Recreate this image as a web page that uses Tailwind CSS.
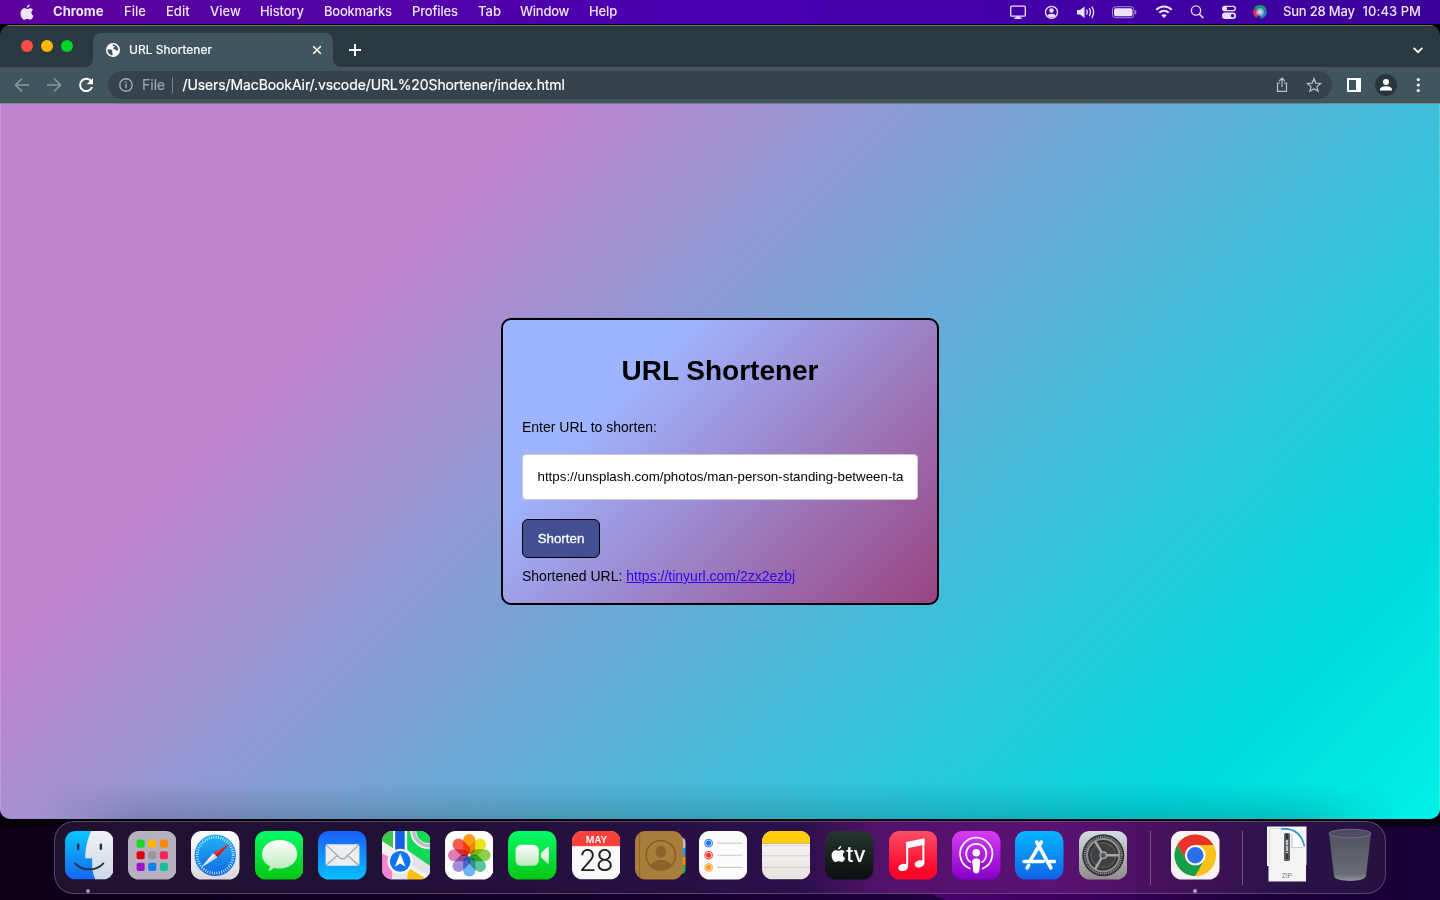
<!DOCTYPE html>
<html lang="en">
<head>
<meta charset="utf-8">
<title>URL Shortener</title>
<script src="https://cdn.jsdelivr.net/npm/@tailwindcss/browser@4"></script>
</head>
<body class="w-[1440px] h-[900px] overflow-hidden flex flex-col bg-[#12001f] font-['Inter',sans-serif]">

<!-- Menu bar -->
<header class="h-6 shrink-0 flex items-center bg-linear-to-r from-[#5c009c] via-[#4900b2] to-[#3b0099] text-[#f0e6fa] text-[13px] leading-[22px] font-medium">
  <div class="w-[53px] pl-[20px] flex">
    <svg width="14" height="17" viewBox="0 0 14 17" fill="#eee4f5"><path d="M9.700.4c.1 1.500-1.200 3.400-2.900 3.400C6.600 2.200 8.200.5 9.700.4zM7.100 5c.7 0 1.600-.8 3-.8 1.200 0 2.300.6 3 1.600-2.500 1.500-2.100 5 .5 6-.6 1.700-2 4-3.300 4-1.100 0-1.500-.7-2.900-.7s-1.800.7-2.900.7C2.700 15.800.5 12.500.5 9.400c0-3.100 1.900-5.100 4-5.100 1.200 0 2 .7 2.600.7z"/></svg>
  </div>
  <div class="w-[71px] h-6 font-bold tracking-[0.05px]">Chrome</div>
  <div class="w-[42px] h-6">File</div>
  <div class="w-[44px] h-6">Edit</div>
  <div class="w-[50px] h-6">View</div>
  <div class="w-[64px] h-6 tracking-[-0.15px]">History</div>
  <div class="w-[88px] h-6 tracking-[-0.25px]">Bookmarks</div>
  <div class="w-[66px] h-6 tracking-[-0.15px]">Profiles</div>
  <div class="w-[42px] h-6">Tab</div>
  <div class="w-[69px] h-6 tracking-[-0.25px]">Window</div>
  <div class="w-[421px] h-6 tracking-[-0.15px]">Help</div>
  <svg class="shrink-0" width="273" height="24" viewBox="1010 0 273 24" fill="none" stroke="#ece2f7" stroke-width="1.300">
    <rect x="1010.700" y="6.200" width="14.600" height="10" rx="1"/><path d="M1014.500 18.200h7" stroke-width="1.600"/><path d="M1018 16v2" stroke-width="3"/>
    <circle cx="1051.500" cy="12.300" r="6"/><circle cx="1051.500" cy="10.500" r="2.200" fill="#ece2f7" stroke="none"/><path d="M1047.300 15.800c.8-2.800 7.600-2.800 8.400 0a6 6 0 0 1-8.400 0z" fill="#ece2f7" stroke="none"/>
    <path d="M1077 10h3l4.500-3.600v11.600l-4.500-3.600h-3z" fill="#ece2f7" stroke="none"/><path d="M1086.600 9.700q1.500 2.500 0 5M1089.200 8.200q2.600 4 0 8M1091.800 6.500q3.800 5.700 0 11.400"/>
    <rect x="1112.500" y="6.700" width="21.500" height="11" rx="3.200" stroke-opacity=".6" stroke-width="1"/><rect x="1114" y="8.200" width="18.500" height="8" rx="2" fill="#ece2f7" stroke="none"/><path d="M1135.600 10.300v3.800" stroke-opacity=".6"/>
    <path d="M1156.300 9.700c4.300-4.300 11.100-4.300 15.400 0M1159.300 12.800c2.700-2.700 6.700-2.700 9.400 0" stroke-width="2"/><path d="M1164 17.900l-2.700-2.700c1.500-1.400 3.900-1.400 5.400 0z" fill="#ece2f7" stroke="none"/>
    <circle cx="1196" cy="10.500" r="4.600"/><path d="M1199.300 14l4 4" stroke-width="1.700"/>
    <rect x="1222.700" y="6.400" width="12.600" height="4.300" rx="2.150"/><circle cx="1224.800" cy="8.500" r="1.700" fill="#ece2f7"/><rect x="1222" y="12.400" width="14" height="6.500" rx="3.250" fill="#ece2f7" stroke="none"/><circle cx="1232.500" cy="15.700" r="1.800" fill="#4300a8" stroke="none"/>
    <defs><radialGradient id="siri"><stop offset="0" stop-color="#fff"/><stop offset=".35" stop-color="#b9b6e6"/><stop offset="1" stop-color="#fff" stop-opacity="0"/></radialGradient></defs>
    <g stroke="none"><circle cx="1260" cy="12" r="6.800" fill="#252f75"/><path d="M1260 12L1254 8.500a6.800 6.800 0 0 1 12.600 2z" fill="#17947c"/><path d="M1260 12l-6.300-2.800a6.800 6.800 0 0 0 2.600 8.600z" fill="#e0305f"/><path d="M1260 12l6.700-1a6.800 6.800 0 0 1-6 7.700z" fill="#2a7fd0"/><circle cx="1260" cy="12" r="4.600" fill="url(#siri)"/></g>
  </svg>
  <div class="w-[79.500px] h-6 tracking-[-0.2px]">Sun 28 May</div>
  <div class="h-6 whitespace-nowrap tracking-[0.050px]">10:43 PM</div>
</header>

<!-- Browser window -->
<main class="h-[795px] shrink-0 pt-px bg-black">
<div class="h-[794px] flex flex-col rounded-[10px] overflow-hidden bg-[#2a383f]">
  <!-- Tab strip -->
  <div class="h-[42px] shrink-0 flex items-end border-t border-[#697377]">
    <div class="w-[85px] h-[41px] flex gap-2 pl-[21px] pt-[14px]">
      <i class="size-3 rounded-full bg-[#ff4f48]"></i><i class="size-3 rounded-full bg-[#ffb900]"></i><i class="size-3 rounded-full bg-[#00d42b]"></i>
    </div>
    <svg width="8" height="8" viewBox="0 0 8 8"><path d="M8 0v8H0a8 8 0 0 0 8-8z" fill="#41555f"/></svg>
    <div class="w-[240px] h-[34px] rounded-t-lg bg-[#41555f] flex items-center pl-[13px] pr-[11px]">
      <svg width="14" height="14" viewBox="0 0 14 14"><circle cx="7" cy="7" r="7" fill="#fff"/><path d="M1.600 6.300l3.600.300c1.200.100 1.400 1.200.900 2.100-.4.800.9.900.800 1.900-.1.700-.6 1-.6 1.900C3.500 12.200 1.300 9.500 1.600 6.300zM6.500 1.600c-.3 1.300.6 1.500 1.600 1.500 1 0 .8 1.200-.3 1.400-1.300.300-.8 1.500.3 1.400 1.400-.1 1.500 1.600 2.600 1.700.7.100 1-.3 1.600-.2.200-3.400-2.600-6.100-5.800-5.800z" fill="#41555f"/></svg>
      <span class="ml-[9px] flex-1 text-[12px] leading-4 text-white [-webkit-text-stroke:0.2px_white]">URL Shortener</span>
      <svg width="10" height="10" viewBox="0 0 10 10" stroke="#fff" stroke-width="1.600"><path d="M1.200 1.200l7.600 7.600M8.800 1.200L1.200 8.800"/></svg>
    </div>
    <svg width="8" height="8" viewBox="0 0 8 8"><path d="M0 0v8h8a8 8 0 0 1-8-8z" fill="#41555f"/></svg>
    <svg class="ml-2 mb-[11px]" width="12" height="12" viewBox="0 0 12 12" stroke="#fff" stroke-width="2"><path d="M6 0v12M0 6h12"/></svg>
    <svg class="ml-auto mr-[17px] mb-[13px]" width="10" height="8" viewBox="0 0 10 8" fill="none" stroke="#fff" stroke-width="1.800"><path d="M.6 1.800L5 6.200l4.400-4.400"/></svg>
  </div>
  <!-- Toolbar -->
  <div class="h-[37px] shrink-0 flex items-center bg-[#41555f] border-b border-[#74858c]">
    <svg width="108" height="36" viewBox="0 0 108 36" fill="none" stroke="#8c989e" stroke-width="1.700"><path d="M29 18H16M22 11.500L15.500 18l6.500 6.500M47 18h13M54 11.500l6.500 6.500-6.500 6.500"/><path d="M91.500 14.500a6.200 6.200 0 1 0 .6 5.500" stroke="#fff" stroke-width="2"/><path d="M93 11v6.300h-6.300z" fill="#fff" stroke="none"/></svg>
    <div class="w-[1224px] h-7 rounded-full bg-[#36434c] flex items-center pl-[11px] text-[14px] leading-5">
      <svg width="14" height="14" viewBox="0 0 14 14" fill="none" stroke="#a3abaf" stroke-width="1.400"><circle cx="7" cy="7" r="6.200"/><path d="M7 6v4.300M7 3.500v1.500"/></svg>
      <span class="ml-[9px] w-[30px] text-[#9ca4a9] [-webkit-text-stroke:0.2px_#9ca4a9]">File</span>
      <i class="w-px h-4 bg-[#7c868c]"></i>
      <span class="ml-[9.500px] flex-1 text-white tracking-[-0.1px] [-webkit-text-stroke:0.2px_white]">/Users/MacBookAir/.vscode/URL%20Shortener/index.html</span>
      <svg class="mr-[8px]" width="48" height="18" viewBox="0 0 48 18" fill="none" stroke="#bcc3c7" stroke-width="1.200"><path d="M4 7H1.500v8.400h9V7H8M6 11V2.500M3.200 5L6 2.200 8.800 5"/><path d="M38 2.700l1.800 4.400 4.800.4-3.600 3.100 1.100 4.600L38 12.700l-4.100 2.500L35 10.600l-3.600-3.100 4.800-.4z"/></svg>
    </div>
    <svg width="107" height="36" viewBox="1332 0 107 36"><path fill-rule="evenodd" d="M1347 11h14v14h-14zM1349 13v10h7V13z" fill="#fff"/><circle cx="1386" cy="18" r="11" fill="#29363d"/><circle cx="1386" cy="15" r="3" fill="#fff"/><path d="M1380 23.500v-1c0-4.500 12-4.500 12 0v1z" fill="#fff"/><g fill="#fff"><circle cx="1418.300" cy="12.500" r="1.600"/><circle cx="1418.300" cy="18" r="1.600"/><circle cx="1418.300" cy="23.500" r="1.600"/></g></svg>
  </div>
  <!-- Page -->
  <div class="relative flex-1 flex flex-col items-center pt-[214px] bg-[linear-gradient(135deg,#bf83d0_25.7%,#00dbde_86.8%,#00f1e6_100%)] bg-origin-border border-x border-white/20 font-['Liberation_Sans',Arial,sans-serif] text-black">
    <div class="absolute left-[40px] bottom-0 w-[1360px] h-[36px] bg-linear-to-b from-transparent to-black/15 [mask-image:linear-gradient(90deg,transparent,#000_8%,#000_92%,transparent)]"></div>
    <section class="w-[438px] h-[287px] rounded-[10px] border-2 border-black bg-[linear-gradient(135deg,#9fb4ff_26.500%,#994380_100%)] bg-origin-border px-[19px] flex flex-col items-start">
      <h1 class="self-center mt-[33px] text-[28px] leading-9 font-bold">URL Shortener</h1>
      <label class="mt-[28px] text-[14px] leading-5">Enter URL to shorten:</label>
      <div class="mt-[17px] w-[396px] h-[46px] rounded border border-[#ccc] bg-white px-[14.500px] flex items-center text-[13.333px] whitespace-nowrap">https://unsplash.com/photos/man-person-standing-between-ta</div>
      <button class="mt-[19px] w-[78px] h-[39px] rounded-md border border-black bg-[#424f93] text-white text-[13.333px] font-['Liberation_Sans',Arial,sans-serif] [-webkit-text-stroke:0.3px_white]">Shorten</button>
      <p class="mt-[8px] text-[14px] leading-5">Shortened URL: <a class="text-[#3300ee] underline">https://tinyurl.com/2zx2ezbj</a></p>
    </section>
  </div>
</div>
</main>

<!-- Desktop with dock -->
<footer class="relative flex-1 pl-[54px] pt-[2px] bg-[linear-gradient(90deg,#0d0018_0%,#100025_35%,#1b0038_58%,#2a004b_75%,#1a0038_92%,#170037_100%)]">
  <svg class="absolute left-0 top-[74px]" width="1440" height="7"><defs><linearGradient id="wp"><stop stop-color="#4d0070"/><stop offset="1" stop-color="#4d0070" stop-opacity="0"/></linearGradient></defs><path d="M930 0q8 5 16 7h290V0z" fill="url(#wp)"/></svg>
  <div class="absolute inset-x-0 top-0 h-3 bg-linear-to-b from-black/90 to-transparent"></div>
  <div class="relative w-[1332px] h-[73px] rounded-[20px] border border-[#6d5a80]/70 bg-[linear-gradient(90deg,#20122f_0%,#221039_30%,#2b104a_56%,#52126a_62%,#5b1273_75%,#48115f_83%,#2c124a_92%,#251241_100%)] pl-[9.600px] pt-[9px] flex items-start gap-[14.900px]">

    <!-- Finder -->
    <svg class="size-[48.500px] shrink-0" viewBox="0 0 48 48">
      <defs><linearGradient id="fb" x2="0" y2="1"><stop stop-color="#08c7ff"/><stop offset="1" stop-color="#1666f4"/></linearGradient><linearGradient id="fw" x2="0" y2="1"><stop stop-color="#f1f0f3"/><stop offset="1" stop-color="#ccd8e6"/></linearGradient><clipPath id="sq"><rect width="48" height="48" rx="10.500"/></clipPath></defs>
      <g clip-path="url(#sq)"><rect width="48" height="48" fill="url(#fb)"/><path d="M26 0c-4 8-6 18-6 27h7c-.5 7 0 15 3 21h18V0z" fill="url(#fw)"/></g>
      <path d="M13 13.500v4M35.500 13.500v4" stroke="#1c3346" stroke-width="2.400" stroke-linecap="round"/><path d="M10 32c7 8 21 8 28 0" fill="none" stroke="#24313d" stroke-width="1.700" stroke-linecap="round"/>
    </svg>
    <!-- Launchpad -->
    <svg class="size-[48.500px] shrink-0" viewBox="0 0 48 48"><rect width="48" height="48" rx="10.500" fill="#b6b0bf"/>
      <rect x="8.500" y="8.500" width="8" height="8" rx="2" fill="#17d52c"/><rect x="20" y="8.500" width="8" height="8" rx="2" fill="#fdb70d"/><rect x="31.500" y="8.500" width="8" height="8" rx="2" fill="#fb8607"/>
      <rect x="8.500" y="20" width="8" height="8" rx="2" fill="#e0000d"/><rect x="20" y="20" width="8" height="8" rx="2" fill="#969a9c"/><rect x="31.500" y="20" width="8" height="8" rx="2" fill="#fb2355"/>
      <rect x="8.500" y="31.500" width="8" height="8" rx="2" fill="#a013cf"/><rect x="20" y="31.500" width="8" height="8" rx="2" fill="#137df5"/><rect x="31.500" y="31.500" width="8" height="8" rx="2" fill="#15be98"/>
    </svg>
    <!-- Safari -->
    <svg class="size-[48.500px] shrink-0" viewBox="0 0 48 48"><defs><linearGradient id="sw" x2="0" y2="1"><stop stop-color="#fff"/><stop offset="1" stop-color="#d9d8da"/></linearGradient><linearGradient id="sb" x2="0" y2="1"><stop stop-color="#1db4f6"/><stop offset="1" stop-color="#1468e2"/></linearGradient></defs>
      <rect width="48" height="48" rx="10.500" fill="url(#sw)"/><circle cx="24" cy="24" r="20.500" fill="url(#sb)"/><circle cx="24" cy="24" r="17.800" fill="none" stroke="#d9efff" stroke-width="2.800" stroke-dasharray=".8 1.530"/><path d="M38.500 12L26 26l-4-4z" fill="#f0322d"/><path d="M38.500 12L26 26l-2-2z" fill="#c31c22"/><path d="M10 36l12-14 4 4z" fill="#fff"/><path d="M10 36l14-12 2 2z" fill="#c9d2dc"/>
    </svg>
    <!-- Messages -->
    <svg class="size-[48.500px] shrink-0" viewBox="0 0 48 48"><defs><linearGradient id="gr" x2="0" y2="1"><stop stop-color="#05fb68"/><stop offset="1" stop-color="#06c713"/></linearGradient><linearGradient id="wg" x2="0" y2="1"><stop stop-color="#fff"/><stop offset="1" stop-color="#b9e9ba"/></linearGradient></defs>
      <rect width="48" height="48" rx="10.500" fill="url(#gr)"/><path d="M24.500 8.800C14.500 8.800 7 14.700 7 23c0 5 3 9.500 7.800 12-.2 1.800-.9 3-2 4.200 2.700-.2 4.500-1 5.800-2.700 13.500 2.600 23.200-4.600 23.200-13.500 0-8.300-7.300-14.200-17.300-14.200z" fill="url(#wg)"/>
    </svg>
    <!-- Mail -->
    <svg class="size-[48.500px] shrink-0" viewBox="0 0 48 48"><defs><linearGradient id="mb" x2="0" y2="1"><stop stop-color="#1a5ff6"/><stop offset="1" stop-color="#07bfff"/></linearGradient></defs>
      <rect width="48" height="48" rx="10.500" fill="url(#mb)"/><rect x="7.500" y="13" width="33.500" height="21.500" rx="2" fill="#ebedf0"/><path d="M8.500 33.700L20 23.500M40 33.700L28.500 23.500M8.300 14l12.500 12c2.300 2.200 4.600 2.200 6.900 0l12.500-12" fill="none" stroke="#a4a8ae" stroke-width="1.200"/>
    </svg>
    <!-- Maps -->
    <svg class="size-[48.500px] shrink-0" viewBox="0 0 48 48"><g clip-path="url(#sq)"><rect width="48" height="48" fill="#f0f0f2"/><path d="M0 0h11v17L0 10z" fill="#3cc74a"/><path d="M25 0h23v38L25 20z" fill="#10d956"/><path d="M0 22l10 5v21H0z" fill="#f683cf"/><path d="M27 37l18 11H24z" fill="#fdbf07"/><path d="M24 18l24 17v10L24 30z" fill="#e2e2e8"/><circle cx="46" cy="0" r="15" fill="none" stroke="#f5f5f7" stroke-width="6"/><circle cx="46" cy="0" r="14.500" fill="none" stroke="#bdbdc4" stroke-width="3.500"/><path d="M11 0h13.500v26H11z" fill="#fff"/><path d="M13 0h9.500v26H13z" fill="#1163e4"/><path d="M10 38h15v10H10z" fill="#e6e6ea"/></g>
      <circle cx="18" cy="30" r="12.500" fill="#f7f8fa"/><circle cx="18" cy="30" r="10.300" fill="#1173f4"/><path d="M18 22l5.300 13.500L18 32.200l-5.300 3.300z" fill="#fff"/>
    </svg>
    <!-- Photos -->
    <svg class="size-[48.500px] shrink-0" viewBox="0 0 48 48"><rect width="48" height="48" rx="10.500" fill="#fdfdfd"/>
      <g><rect x="18" y="3" width="12" height="20" rx="6" fill="#ff9d16" class="mix-blend-multiply"/><rect x="18" y="3" width="12" height="20" rx="6" fill="#ece41a" class="mix-blend-multiply" transform="rotate(45 24 24)"/><rect x="18" y="3" width="12" height="20" rx="6" fill="#8ed04a" class="mix-blend-multiply" transform="rotate(90 24 24)"/><rect x="18" y="3" width="12" height="20" rx="6" fill="#5cc79c" class="mix-blend-multiply" transform="rotate(135 24 24)"/><rect x="18" y="3" width="12" height="20" rx="6" fill="#6cb8f3" class="mix-blend-multiply" transform="rotate(180 24 24)"/><rect x="18" y="3" width="12" height="20" rx="6" fill="#a28fd8" class="mix-blend-multiply" transform="rotate(225 24 24)"/><rect x="18" y="3" width="12" height="20" rx="6" fill="#de80bb" class="mix-blend-multiply" transform="rotate(270 24 24)"/><rect x="18" y="3" width="12" height="20" rx="6" fill="#fb5c4c" class="mix-blend-multiply" transform="rotate(315 24 24)"/></g>
    </svg>
    <!-- FaceTime -->
    <svg class="size-[48.500px] shrink-0" viewBox="0 0 48 48"><rect width="48" height="48" rx="10.500" fill="url(#gr)"/><rect x="7.500" y="13.500" width="23" height="21" rx="5.500" fill="url(#wg)"/><path d="M32.500 22l6.200-5.800c.8-.8 1.800-.4 1.800.7v14.200c0 1.100-1 1.500-1.800.7L32.500 26z" fill="url(#wg)"/></svg>
    <!-- Calendar -->
    <svg class="size-[48.500px] shrink-0" viewBox="0 0 48 48"><g clip-path="url(#sq)"><rect width="48" height="48" fill="#f9f9f9"/><rect width="48" height="15" fill="#fb4139"/></g><text x="24.200" y="11.700" text-anchor="middle" font-family="Inter" font-weight="600" font-size="9.200" fill="#fff">MAY</text><text x="23.500" y="40" text-anchor="middle" font-family="Inter" font-weight="300" font-size="29" letter-spacing="-1" fill="#222">28</text></svg>
    <!-- Contacts -->
    <svg class="size-[48.500px] shrink-0 overflow-visible" viewBox="0 0 48 48"><path d="M45 6q5 1 5 5v6h-5z" fill="#c2bcb6"/><path d="M45 17h5v8.500h-5z" fill="#239fe0"/><path d="M45 25.500h5V34h-5z" fill="#f68a13"/><path d="M45 34h5v4q0 4-5 5z" fill="#12bd55"/><rect width="47.500" height="48" rx="10" fill="#ab7d3b"/><path d="M4.500 2.500v43" stroke="#926629"/><g stroke="#855d28" stroke-width="1.500" fill="none"><circle cx="25.500" cy="24" r="14.500"/></g><ellipse cx="25.500" cy="20.500" rx="5.200" ry="6" fill="#8b622c"/><path d="M15.500 34c3-7 17-7 20 0a14 14 0 0 1-20 0z" fill="#8b622c"/></svg>
    <!-- Reminders -->
    <svg class="size-[48.500px] shrink-0" viewBox="0 0 48 48"><rect width="48" height="48" rx="10.500" fill="#fcfcfc"/><g stroke="#c9c9cc"><path d="M18 12h25M18 24h25M18 36h25"/></g><g fill="none"><g stroke="#1675fb"><circle cx="9.500" cy="12" r="3.700"/></g><g stroke="#fb2d2b"><circle cx="9.500" cy="24" r="3.700"/></g><g stroke="#fb9d22"><circle cx="9.500" cy="36" r="3.700"/></g></g><circle cx="9.500" cy="12" r="2.500" fill="#1675fb"/><circle cx="9.500" cy="24" r="2.500" fill="#fb2d2b"/><circle cx="9.500" cy="36" r="2.500" fill="#fb9d22"/></svg>
    <!-- Notes -->
    <svg class="size-[48.500px] shrink-0" viewBox="0 0 48 48"><defs><linearGradient id="nt" x2="0" y2="1"><stop stop-color="#fbfaf9"/><stop offset="1" stop-color="#e6e2df"/></linearGradient></defs><g clip-path="url(#sq)"><rect width="48" height="48" fill="url(#nt)"/><rect width="48" height="12" fill="#fecf07"/><path d="M0 12.400h48" stroke="#b8a67c" stroke-width=".8"/></g><path d="M1 14.500h46" stroke="#b4b1ae" stroke-width="1" stroke-dasharray=".9 1.100"/><path d="M0 24.500h48M0 36h48" stroke="#d3d0ce"/></svg>
    <!-- TV -->
    <svg class="size-[48.500px] shrink-0" viewBox="0 0 48 48"><defs><linearGradient id="tv" x2="0" y2="1"><stop stop-color="#26352f"/><stop offset="1" stop-color="#0b0f10"/></linearGradient></defs><rect width="48" height="48" rx="10.500" fill="url(#tv)"/><path transform="translate(6 14.500) scale(1.030)" fill="#fff" d="M9.700.4c.1 1.500-1.200 3.400-2.900 3.400C6.600 2.200 8.200.5 9.700.4zM7.100 5c.7 0 1.600-.8 3-.8 1.200 0 2.300.6 3 1.600-2.500 1.500-2.100 5 .5 6-.6 1.700-2 4-3.300 4-1.100 0-1.500-.7-2.900-.7s-1.800.7-2.900.7C2.700 15.800.5 12.500.5 9.400c0-3.100 1.900-5.100 4-5.100 1.200 0 2 .7 2.600.7z"/><text x="21" y="31" font-family="Inter" font-weight="500" font-size="21" letter-spacing="-.3" fill="#fff">tv</text></svg>
    <!-- Music -->
    <svg class="size-[48.500px] shrink-0" viewBox="0 0 48 48"><defs><linearGradient id="mu" x2="0" y2="1"><stop stop-color="#fb4e67"/><stop offset=".8" stop-color="#fb0729"/></linearGradient></defs><rect width="48" height="48" rx="10.500" fill="url(#mu)"/><path d="M34 8v23.500M18 35V12" fill="none" stroke="#fff" stroke-width="2"/><path d="M17 10.800L35 7.200v6.500l-18 3.600z" fill="#fff"/><ellipse cx="14" cy="36" rx="4.900" ry="3.500" fill="#fff" transform="rotate(-15 14 36)"/><ellipse cx="30.200" cy="32.500" rx="4.900" ry="3.500" fill="#fff" transform="rotate(-15 30.200 32.500)"/></svg>
    <!-- Podcasts -->
    <svg class="size-[48.500px] shrink-0" viewBox="0 0 48 48"><defs><linearGradient id="po" x2="0" y2="1"><stop stop-color="#d83df4"/><stop offset="1" stop-color="#8500c7"/></linearGradient></defs><rect width="48" height="48" rx="10.500" fill="url(#po)"/><g fill="none" stroke="#fff" stroke-width="1.700" stroke-linecap="round"><path d="M17.500 37.200a16 16 0 1 1 13 0"/><path d="M18.200 30.800a10 10 0 1 1 11.600 0"/></g><circle cx="24" cy="21.500" r="3.700" fill="#fff"/><path d="M20 30c0-4 8-4 8 0l-1 9.500c-.5 3.300-5.500 3.300-6 0z" fill="#fff"/></svg>
    <!-- App Store -->
    <svg class="size-[48.500px] shrink-0" viewBox="0 0 48 48"><defs><linearGradient id="as" x2="0" y2="1"><stop stop-color="#06b6fd"/><stop offset="1" stop-color="#1163e7"/></linearGradient></defs><rect width="48" height="48" rx="10.500" fill="url(#as)"/><g stroke="#fff" stroke-width="3.600" stroke-linecap="round"><path d="M26 11L15 29.500M21.500 11l14 25.500M9 30.200h19M34.500 30.200H39M13.500 34L12 36.500"/></g></svg>
    <!-- Settings -->
    <svg class="size-[48.500px] shrink-0" viewBox="0 0 48 48"><defs><linearGradient id="st" x2="0" y2="1"><stop stop-color="#d2dae2"/><stop offset="1" stop-color="#918d8c"/></linearGradient></defs><rect width="48" height="48" rx="10.500" fill="url(#st)"/><circle cx="24" cy="24" r="20.800" fill="#303133"/><circle cx="24" cy="24" r="18.300" fill="none" stroke="#929496" stroke-width="1.800" stroke-dasharray="1.100 .815"/><circle cx="24" cy="24" r="16" fill="none" stroke="#8f9193" stroke-width="2"/><circle cx="24" cy="24" r="12.300" fill="#3e4042" stroke="#626466" stroke-width="1.600" stroke-dasharray="1 .5"/><path d="M24 24h15.500M24 24l-8-13.500M24 24l-8 13.500" stroke="#a7a9ab" stroke-width="2.400"/><circle cx="24" cy="24" r="3.200" fill="#55585a" stroke="#a7a9ab" stroke-width="1.300"/></svg>
    <i class="w-px h-[54px] shrink-0 ml-[7.500px] bg-[#77558a]"></i>
    <!-- Chrome -->
    <svg class="size-[48.500px] shrink-0 ml-[5.500px]" viewBox="0 0 48 48"><rect width="48" height="48" rx="10.500" fill="#f5f3f7"/><circle cx="24" cy="24" r="20.500" fill="#fcc21b"/><path d="M6.250 13.750A20.500 20.500 0 0 1 41.750 13.750H24L15.100 29.100z" fill="#e8332a"/><path d="M6.250 13.750A20.500 20.500 0 0 0 24 44.500L32.900 29.100H15.100z" fill="#14a049"/><path d="M24 44.500L32.900 29.100A10.250 10.250 0 0 0 32.900 18.900L24 13.750h17.750A20.500 20.500 0 0 1 24 44.500z" fill="#fcc21b"/><circle cx="24" cy="24" r="10.250" fill="#fff"/><circle cx="24" cy="24" r="8.200" fill="#2a6fee"/></svg>
    <i class="w-px h-[54px] shrink-0 ml-[7px] bg-[#6c5683]"></i>
    <!-- Zip file -->
    <svg class="w-[40px] h-[56px] shrink-0 ml-[10px] -mt-[5px]" viewBox="0 0 40 56"><path d="M0 .5h39.500V39H39v16.500H1.500V40H0z" fill="#f4f4f4"/><path d="M2.500 2.500h16M2.500 2.500V38" stroke="#dcdcdc"/><path d="M14 3q19-2 24 18l-13 1V8z" fill="#fff"/><path d="M14 3q19-2 23.500 17.500" fill="none" stroke="#2f92da" stroke-width="1.700"/><path d="M25 8v13.500h11" fill="none" stroke="#ccc" stroke-width="1.200"/><rect x="17" y="7" width="6" height="28" rx="1.500" fill="#5d6265"/><path d="M20 14v13" stroke="#b8c4ca" stroke-width="2.200" stroke-dasharray="5 1"/><path d="M20 8v5M20 28v5" stroke="#2f3335" stroke-width="2.200"/><text x="20" y="51.500" text-anchor="middle" font-family="Inter" font-size="6.800" fill="#777">ZIP</text></svg>
    <!-- Trash -->
    <svg class="w-[44px] h-[54px] shrink-0 ml-[6px] -mt-[3px]" viewBox="0 0 44 54"><defs><linearGradient id="tr" x2="0" y2="1"><stop stop-color="#525461"/><stop offset=".85" stop-color="#666c72"/><stop offset="1" stop-color="#8f959a"/></linearGradient></defs><path d="M1 5l5 43c1 6.500 31 6.500 32 0l5-43z" fill="url(#tr)"/><ellipse cx="22" cy="5.500" rx="21" ry="4.300" fill="#514a66" stroke="#77768a" stroke-width=".8"/></svg>

    <i class="absolute left-[31px] top-[67px] size-1 rounded-full bg-[#aa8fc0]"></i>
    <i class="absolute left-[1138px] top-[67px] size-1 rounded-full bg-[#bd8fd8]"></i>
  </div>
</footer>
</body>
</html>
